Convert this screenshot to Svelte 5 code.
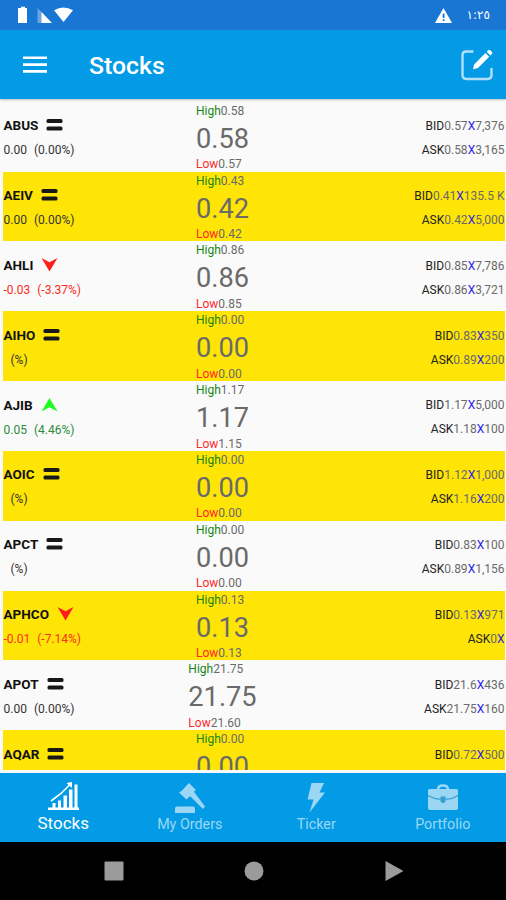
<script>
  const stocks = [
    { symbol: "ABUS", trend: "same", change: "0.00", percent: "0.00", high: "0.58", price: "0.58", low: "0.57", bid: "0.57", bidQty: "7,376", ask: "0.58", askQty: "3,165" },
    { symbol: "AEIV", trend: "same", change: "0.00", percent: "0.00", high: "0.43", price: "0.42", low: "0.42", bid: "0.41", bidQty: "135.5 K", ask: "0.42", askQty: "5,000" },
    { symbol: "AHLI", trend: "down", change: "-0.03", percent: "-3.37", high: "0.86", price: "0.86", low: "0.85", bid: "0.85", bidQty: "7,786", ask: "0.86", askQty: "3,721" },
    { symbol: "AIHO", trend: "same", change: "", percent: "", high: "0.00", price: "0.00", low: "0.00", bid: "0.83", bidQty: "350", ask: "0.89", askQty: "200" },
    { symbol: "AJIB", trend: "up", change: "0.05", percent: "4.46", high: "1.17", price: "1.17", low: "1.15", bid: "1.17", bidQty: "5,000", ask: "1.18", askQty: "100" },
    { symbol: "AOIC", trend: "same", change: "", percent: "", high: "0.00", price: "0.00", low: "0.00", bid: "1.12", bidQty: "1,000", ask: "1.16", askQty: "200" },
    { symbol: "APCT", trend: "same", change: "", percent: "", high: "0.00", price: "0.00", low: "0.00", bid: "0.83", bidQty: "100", ask: "0.89", askQty: "1,156" },
    { symbol: "APHCO", trend: "down", change: "-0.01", percent: "-7.14", high: "0.13", price: "0.13", low: "0.13", bid: "0.13", bidQty: "971", ask: "0", askQty: "" },
    { symbol: "APOT", trend: "same", change: "0.00", percent: "0.00", high: "21.75", price: "21.75", low: "21.60", bid: "21.6", bidQty: "436", ask: "21.75", askQty: "160" },
    { symbol: "AQAR", trend: "same", high: "0.00", price: "0.00", bid: "0.72", bidQty: "500" }
  ];

  const tabs = ["Stocks", "My Orders", "Ticker", "Portfolio"];
  let active = $state("Stocks");
</script>

<div class="screen">
  <div class="status">
    <svg width="58" height="18" viewBox="0 0 58 18" fill="#fff">
      <path d="M3 2h2V.8h4V2h2v15H2V2z" />
      <path d="M21.5 2l5 5v10h-5z" opacity=".35" />
      <path d="M25.5 6l10.5 11H25.5z" />
      <path d="M38 4.2Q47.5-1.2 57 4.2L47.5 16z" />
    </svg>
    <div class="status-right">
      <svg width="17" height="15" viewBox="0 0 17 15">
        <path d="M8.5 0L17 15H0z" fill="#fff" />
        <path d="M7.7 5.5h1.8v4.5H7.7zM7.7 11.3h1.8v1.7H7.7z" fill="#1976d2" />
      </svg>
      <span class="clock">١:٢٥</span>
    </div>
  </div>

  <header>
    <button aria-label="Menu">
      <svg width="24" height="18" viewBox="0 0 24 18" fill="#fff">
        <path d="M0 .5h24v2.6H0zM0 7.3h24v2.6H0zM0 14.1h24v2.6H0z" />
      </svg>
    </button>
    <h1>Stocks</h1>
    <button aria-label="Edit">
      <svg width="34" height="34" viewBox="0 0 34 34">
        <path d="M13.5 3.5H6Q2.5 3.5 2.5 7v20q0 4 4 4h21q4 0 4-4V20" fill="none" stroke="#b3e0f8" stroke-width="2.4" />
        <path d="M13 21.2l1.3-5L25.5 5l3.7 3.7L18 20z" fill="#fff" />
        <path d="M26.7 3.8L28.2 2.3q1-1 2 0l1.7 1.7q1 1 0 2L30.4 7.5z" fill="#fff" />
      </svg>
    </button>
  </header>

  <main>
    {#each stocks as stock}
      <div class="row">
        <div class="info">
          <div class="symbol">
            <span>{stock.symbol}</span>
            {#if stock.trend === "same"}
              <svg width="17" height="12" viewBox="0 0 17 12" fill="#181818">
                <rect x=".5" y="0" width="16" height="4" rx="1.5" />
                <rect x=".5" y="7.5" width="16" height="4" rx="1.5" />
              </svg>
            {:else if stock.trend === "up"}
              <svg width="17" height="14" viewBox="0 0 17 14"><path d="M8.5 0L16.5 13.5L8.5 9.3L.5 13.5z" fill="#1cff1c" /></svg>
            {:else}
              <svg width="17" height="14" viewBox="0 0 17 14"><path d="M8.5 13.5L16.5 0L8.5 4.2L.5 0z" fill="#ff1c1c" /></svg>
            {/if}
          </div>
          {#if stock.change !== undefined}
            <div class="change {stock.trend}">
              <span>{stock.change}</span>
              <span>({stock.percent}%)</span>
            </div>
          {/if}
        </div>

        <div class="quote">
          <div>
            <div class="small"><span class="high">High</span>{stock.high}</div>
            <div class="price">{stock.price}</div>
            {#if stock.low}
              <div class="small"><span class="low">Low</span>{stock.low}</div>
            {/if}
          </div>
        </div>

        <div class="book">
          <div><b>BID</b>{stock.bid}<i>X</i>{stock.bidQty}</div>
          {#if stock.ask}
            <div><b>ASK</b>{stock.ask}<i>X</i>{stock.askQty}</div>
          {/if}
        </div>
      </div>
    {/each}
  </main>

  <nav>
    {#each tabs as tab}
      <button class="tab" class:active={active === tab} onclick={() => (active = tab)}>
        <svg width="32" height="32" viewBox="0 0 32 32" fill="currentColor">
          {#if tab === "Stocks"}
            <path d="M1 25.5h31v2.5H1zM5.5 21h3v5h-3zM11 18.5h3v7.5h-3zM16.5 13.5h3.5v12h-3.5zM22 7.5h3.5v18H22zM27.5 2.5h3v23h-3z" />
            <path d="M4 19L14 11.5L23 2.5" fill="none" stroke="currentColor" stroke-width="1.6" />
            <path d="M19.5 1l5.5-1v6z" />
          {:else if tab === "My Orders"}
            <path d="M1 26.500q0-2 2-2h16q2 0 2 2V31H1z" />
            <path d="M15 1L22 8l-2 1.500.5 1L31 24.500 29 27 17 15l-1.500-.5-3 3L5 10.500 7.500 9 13 3z" />
          {:else if tab === "Ticker"}
            <path d="M11.500 1H24L19.500 10.500H25L9.500 30.500L13.500 17.500H7.500z" />
          {:else}
            <path d="M11 7.500q0-4 5-4t5 4" fill="none" stroke="currentColor" stroke-width="2.500" />
            <path d="M2.500 7h27q1.500 0 1.500 1.500V26q0 2-2 2H3q-2 0-2-2V8.500Q1 7 2.500 7z" />
            <path d="M1 13.500q7 4 12 3.500h6q6 .5 12-3.500" fill="none" stroke="#359fd0" stroke-width="1.200" />
            <path d="M13.500 14.500h5v5l-2.500 2-2.500-2z" fill="#359fd0" />
          {/if}
        </svg>
        <span>{tab}</span>
      </button>
    {/each}
  </nav>

  <div class="system">
    <svg width="20" height="20" viewBox="0 0 20 20"><rect x=".5" y=".5" width="19" height="19" rx="1" fill="#9b9b9b" /></svg>
    <svg width="20" height="20" viewBox="0 0 20 20"><circle cx="10" cy="10" r="9.500" fill="#9b9b9b" /></svg>
    <svg width="20" height="20" viewBox="0 0 20 20"><path d="M1.500 0L19.500 10L1.500 20z" fill="#9b9b9b" /></svg>
  </div>
</div>

<style>
  :global(body) {
    margin: 0;
    background: #000;
  }

  .screen {
    display: flex;
    flex-direction: column;
    width: 506px;
    height: 900px;
    overflow: hidden;
    background: #fafafa;
    color: #6a6a6a;
    font-family: Roboto, sans-serif;
  }

  button {
    padding: 0;
    border: none;
    background: none;
    font-family: inherit;
    cursor: pointer;
  }

  svg {
    display: block;
    flex: none;
  }

  .status {
    display: flex;
    align-items: center;
    justify-content: space-between;
    height: 30px;
    flex: none;
    box-sizing: border-box;
    padding: 0 16px;
    background: #1976d2;
  }

  .status-right {
    display: flex;
    align-items: center;
    gap: 15px;
  }

  .clock {
    color: #fff;
    font: 12px "DejaVu Sans", sans-serif;
  }

  header {
    display: flex;
    align-items: center;
    height: 68.5px;
    flex: none;
    box-sizing: border-box;
    padding: 2px 12px 0 23px;
    background: #039be5;
    box-shadow: 0 1px 2px #bbb;
    z-index: 1;
  }

  h1 {
    margin: 0 auto 0 42px;
    color: #fff;
    font-size: 24.8px;
    font-weight: 500;
  }

  main {
    height: 671.5px;
    flex: none;
    box-sizing: border-box;
    padding: 3.2px 1px 0 3px;
    overflow: hidden;
  }

  .row {
    display: grid;
    grid-template-columns: 148px 143px 1fr;
    height: 69.85px;
    overflow: hidden;
    font-size: 12px;
  }

  .row:nth-child(even) {
    background: #ffe505;
  }

  .symbol {
    display: flex;
    align-items: center;
    gap: 8px;
    height: 24px;
    padding: 11.5px 0 1px .5px;
    color: #111;
    font-size: 13.5px;
    font-weight: 700;
  }

  .change {
    display: flex;
    gap: 7px;
    height: 24px;
    padding-left: .5px;
    line-height: 25px;
    color: #333;
    font-size: 12px;
    white-space: pre;
  }

  .change.up {
    color: #2b8a3a;
  }

  .change.down {
    color: #ff2a20;
  }

  .quote {
    display: flex;
    justify-content: center;
  }

  .small {
    height: 16px;
    padding-top: 1px;
    line-height: 16px;
  }

  .high {
    color: #168516;
  }

  .low {
    color: #ff2929;
  }

  .price {
    height: 36.5px;
    line-height: 40px;
    font-size: 27.2px;
  }

  .book {
    padding: 12.3px .5px 0 0;
    line-height: 24px;
    text-align: right;
  }

  .book b {
    color: #222;
    font-weight: 400;
  }

  .book i {
    color: #2a20e8;
    font-style: normal;
  }

  nav {
    display: flex;
    height: 69.5px;
    flex: none;
    margin-top: 2.5px;
    background: #039be5;
  }

  .tab {
    display: flex;
    flex: 1 1 0;
    flex-direction: column;
    align-items: center;
    padding-top: 9px;
    color: #9bd7f5;
  }

  .tab span {
    height: 20px;
    line-height: 20px;
    font-size: 14.3px;
  }

  .tab.active {
    color: #fff;
  }

  .tab.active span {
    line-height: 18px;
    font-size: 17px;
  }

  .system {
    display: flex;
    flex: 1;
    align-items: center;
    justify-content: center;
    gap: 120px;
    padding-left: 1px;
    background: #000;
  }
</style>
